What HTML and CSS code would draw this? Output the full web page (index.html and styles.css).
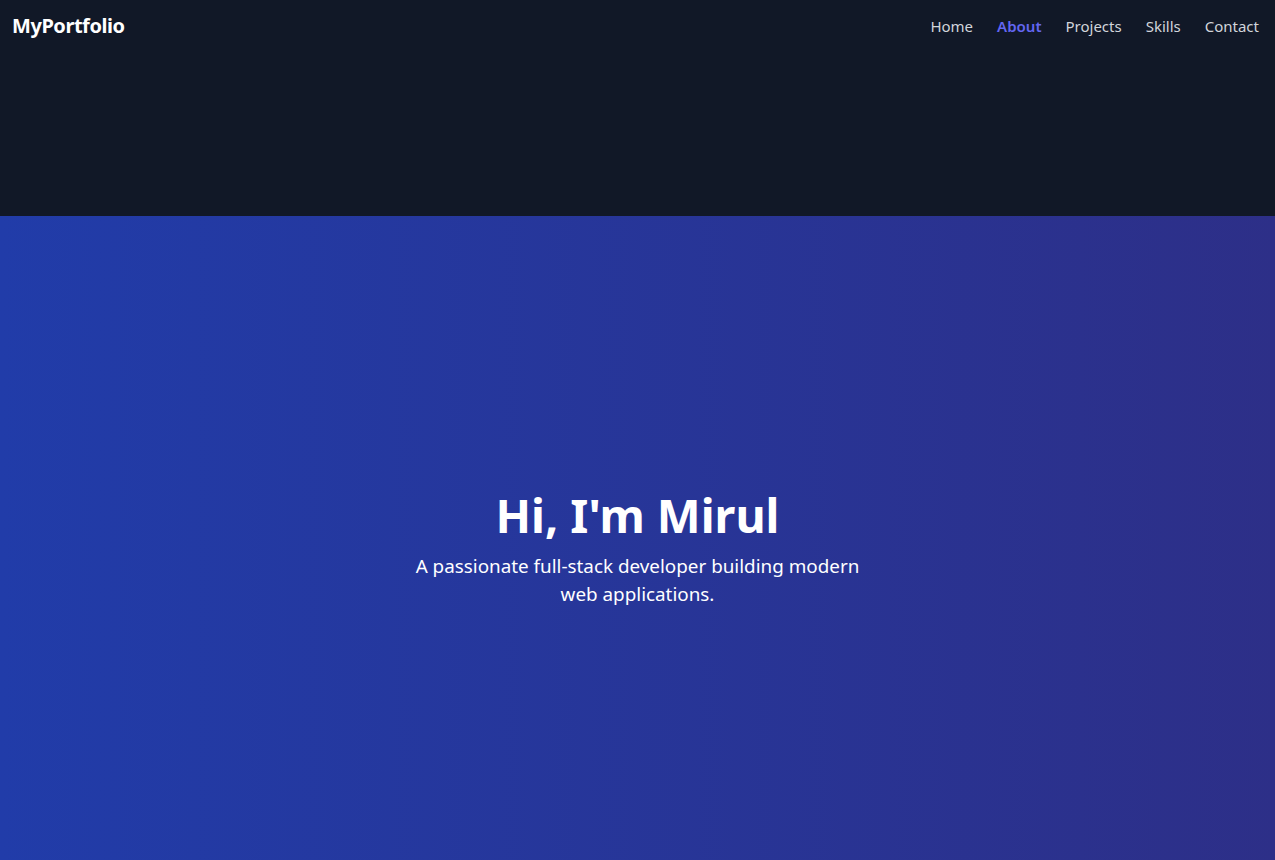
FILE: index.html
```html
<!DOCTYPE html>
<html lang="en">
<head>
<meta charset="utf-8">
<title>MyPortfolio</title>
<link rel="stylesheet" href="styles.css">
</head>
<body>
<header class="top">
  <nav class="nav">
    <a class="logo" href="#">MyPortfolio</a>
    <ul class="links">
      <li><a href="#">Home</a></li>
      <li><a class="active" href="#">About</a></li>
      <li><a href="#">Projects</a></li>
      <li><a href="#">Skills</a></li>
      <li><a href="#">Contact</a></li>
    </ul>
  </nav>
</header>
<section class="hero">
  <div class="hero-inner">
    <h1 class="title">Hi, I'm Mirul</h1>
    <p class="lead">A passionate full-stack developer building modern web applications.</p>
  </div>
</section>
</body>
</html>
```
FILE: styles.css
```css
* { box-sizing: border-box; }
html, body { margin: 0; padding: 0; }
body {
  font-family: "Noto Sans", "Open Sans", sans-serif;
  background: #111827;
  color: #fff;
  height: 860px;
  overflow: hidden;
  display: flex;
  flex-direction: column;
}
.top {
  height: 216px;
  background: #111827;
}
.nav {
  display: flex;
  justify-content: space-between;
  align-items: center;
  padding: 12px 16px 0 12px;
}
.logo {
  color: #fff;
  text-decoration: none;
  font-weight: 700;
  font-size: 20px;
  letter-spacing: -0.45px;
}
.links {
  list-style: none;
  margin: 0;
  padding: 0;
  display: flex;
  gap: 24px;
}
.links a {
  color: #d1d5db;
  text-decoration: none;
  font-size: 15px;
}
.links a.active {
  color: #6366f1;
  font-weight: 600;
}
.hero {
  flex: 1;
  background: linear-gradient(to right, #213ca9, #2d2f88);
  display: flex;
  align-items: center;
  justify-content: center;
  text-align: center;
}
.hero-inner {
  max-width: 470px;
  padding-top: 20px;
}
.title {
  margin: 0 0 8px;
  font-size: 46.5px;
  font-weight: 700;
  line-height: 1.2;
}
.lead {
  margin: 0;
  font-size: 18.85px;
  line-height: 28px;
}
```
